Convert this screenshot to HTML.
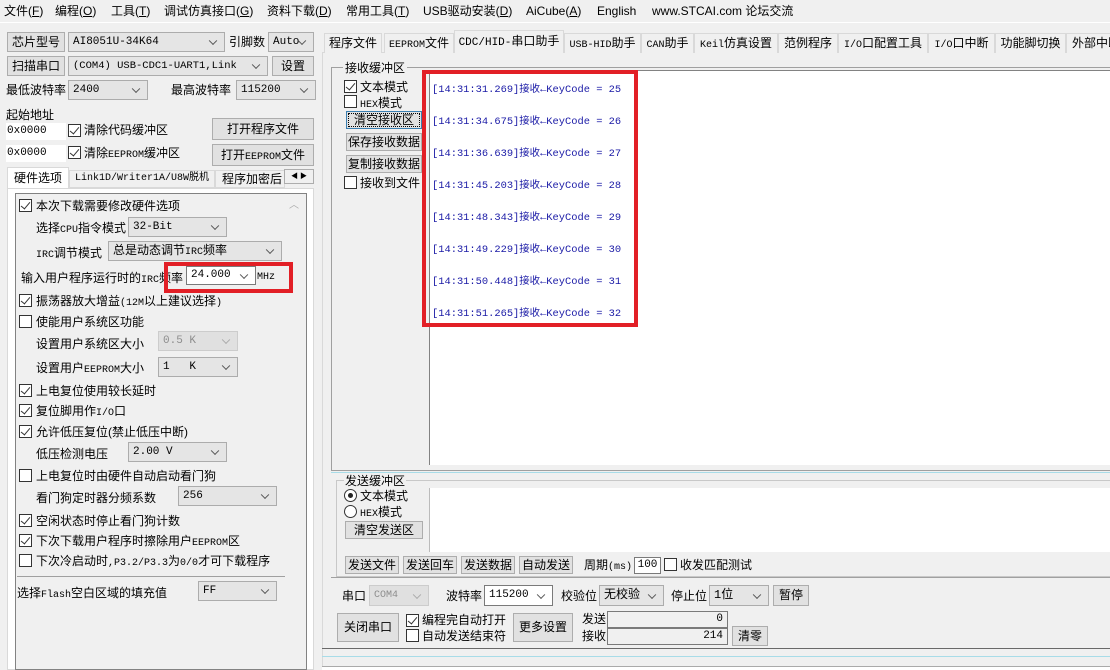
<!DOCTYPE html>
<html><head><meta charset="utf-8"><style>
*{box-sizing:border-box;margin:0;padding:0}
body{width:1110px;height:670px;background:#f0f0f0;position:relative;overflow:hidden;font-family:"Liberation Sans","Noto Sans CJK SC",sans-serif;font-size:12px;color:#000}
.a{position:absolute;white-space:nowrap}
.t{position:absolute;white-space:nowrap;line-height:16px}
.btn{position:absolute;background:#e1e1e1;border:1px solid #adadad;text-align:center;white-space:nowrap;font-size:12px}
.sel{position:absolute;background:#e5e5e5;border:1px solid #acacac;font-family:"Liberation Mono","Noto Sans CJK SC",monospace;font-size:11px;padding-left:4px;white-space:nowrap}
.sel:after{content:"";position:absolute;right:8px;top:50%;width:5px;height:5px;border-right:1px solid #555;border-bottom:1px solid #555;transform:translateY(-70%) rotate(45deg)}
.sel.w{background:#fff;border-color:#7a7a7a}
.sel.dis{color:#8d8d8d;background:#e0e0e0;border-color:#ccc}
.sel.dis:after{border-color:#aaa}
.cb{position:absolute;width:13px;height:13px;border:1px solid #333;background:#fff}
.cb.on:after{content:"";position:absolute;left:3px;top:0px;width:4px;height:8px;border-right:1.5px solid #333;border-bottom:1.5px solid #333;transform:rotate(40deg)}
.rb{position:absolute;width:13px;height:13px;border:1px solid #333;border-radius:50%;background:#fff}
.rb.on:after{content:"";position:absolute;left:3px;top:3px;width:5px;height:5px;border-radius:50%;background:#222}
.in{position:absolute;background:#fff;border:1px solid #7a7a7a;font-family:"Liberation Mono",monospace;font-size:11px;white-space:nowrap}
.tab{position:absolute;top:33px;height:20px;border:1px solid #d9d9d9;border-bottom:none;background:#f0f0f0;line-height:18px;text-align:center;white-space:nowrap;font-size:12px;overflow:hidden}
.m{font-family:"Liberation Mono","Noto Sans CJK SC",monospace;font-size:10px}
.line{position:absolute;font-family:"Liberation Mono","Noto Sans CJK SC",monospace;font-size:10.4px;color:#1a1aa6;left:432px}
</style></head><body>
<!-- menu -->
<div class="t" style="left:4px;top:3px">文件(<u>F</u>)</div>
<div class="t" style="left:55px;top:3px">编程(<u>O</u>)</div>
<div class="t" style="left:111px;top:3px">工具(<u>T</u>)</div>
<div class="t" style="left:164px;top:3px">调试仿真接口(<u>G</u>)</div>
<div class="t" style="left:267px;top:3px">资料下载(<u>D</u>)</div>
<div class="t" style="left:346px;top:3px">常用工具(<u>T</u>)</div>
<div class="t" style="left:423px;top:3px">USB驱动安装(<u>D</u>)</div>
<div class="t" style="left:526px;top:3px">AiCube(<u>A</u>)</div>
<div class="t" style="left:597px;top:3px">English</div>
<div class="t" style="left:652px;top:3px">www.STCAI.com 论坛交流</div>
<div class="a" style="left:0;top:22px;width:1110px;height:1px;background:#fff"></div>

<!-- left top -->
<div class="btn" style="left:7px;top:32px;width:58px;height:20px;line-height:18px">芯片型号</div>
<div class="sel" style="left:68px;top:32px;width:157px;height:20px;line-height:18px">AI8051U-34K64</div>
<div class="t" style="left:229px;top:34px">引脚数</div>
<div class="sel" style="left:268px;top:32px;width:46px;height:20px;line-height:18px">Auto</div>
<div class="btn" style="left:7px;top:56px;width:58px;height:20px;line-height:18px">扫描串口</div>
<div class="sel" style="left:68px;top:56px;width:200px;height:20px;line-height:18px;font-size:10.5px">(COM4) USB-CDC1-UART1,Link</div>
<div class="btn" style="left:272px;top:56px;width:42px;height:20px;line-height:18px">设置</div>
<div class="t" style="left:6px;top:82px">最低波特率</div>
<div class="sel" style="left:68px;top:80px;width:80px;height:20px;line-height:18px">2400</div>
<div class="t" style="left:171px;top:82px">最高波特率</div>
<div class="sel" style="left:236px;top:80px;width:80px;height:20px;line-height:18px">115200</div>
<div class="t" style="left:6px;top:107px">起始地址</div>
<div class="in" style="left:6px;top:123px;width:60px;height:17px;line-height:15px;border-color:#fff">0x0000</div>
<div class="cb on" style="left:68px;top:124px"></div><div class="t" style="left:84px;top:122px">清除代码缓冲区</div>
<div class="btn" style="left:212px;top:118px;width:102px;height:22px;line-height:20px">打开程序文件</div>
<div class="in" style="left:6px;top:145px;width:60px;height:17px;line-height:15px;border-color:#fff">0x0000</div>
<div class="cb on" style="left:68px;top:146px"></div><div class="t" style="left:84px;top:145px">清除<span class="m">EEPROM</span>缓冲区</div>
<div class="btn" style="left:212px;top:144px;width:102px;height:22px;line-height:20px">打开<span class="m">EEPROM</span>文件</div>
<!-- left tabs -->
<div class="a" style="left:7px;top:167px;width:62px;height:22px;background:#fff;border:1px solid #d9d9d9;border-bottom:none;text-align:center;line-height:20px">硬件选项</div>
<div class="a m" style="left:69px;top:170px;width:146px;height:18px;border:1px solid #d9d9d9;line-height:16px;text-align:center">Link1D/Writer1A/U8W脱机</div>
<div class="a" style="left:215px;top:170px;width:70px;height:18px;border:1px solid #d9d9d9;line-height:16px;padding-left:6px;overflow:hidden">程序加密后</div>
<div class="a" style="left:284px;top:169px;width:30px;height:15px;border:1px solid #adadad;background:#f0f0f0;font-size:7px;line-height:13px;text-align:center">◀ ▶</div>
<div class="a" style="left:7px;top:188px;width:307px;height:482px;background:#fff;border:1px solid #d9d9d9"></div>
<div class="a" style="left:15px;top:193px;width:292px;height:477px;background:#f0f0f0;border:1px solid #828282"></div>
<div class="t" style="left:289px;top:198px;color:#aaa;font-size:10px">︿</div>

<div class="cb on" style="left:19px;top:199px"></div><div class="t" style="left:36px;top:198px">本次下载需要修改硬件选项</div>
<div class="t" style="left:36px;top:220px">选择<span class="m">CPU</span>指令模式</div>
<div class="sel" style="left:128px;top:217px;width:99px;height:20px;line-height:18px">32-Bit</div>
<div class="t" style="left:36px;top:245px"><span class="m">IRC</span>调节模式</div>
<div class="sel" style="left:108px;top:241px;width:174px;height:20px;line-height:18px;font-size:12px">总是动态调节<span class="m">IRC</span>频率</div>
<div class="t" style="left:21px;top:270px">输入用户程序运行时的<span class="m">IRC</span>频率</div>
<div class="sel w" style="left:186px;top:266px;width:70px;height:19px;line-height:17px">24.000</div>
<div class="t m" style="left:257px;top:270px">MHz</div>
<div class="a" style="left:164px;top:262px;width:129px;height:31px;border:4px solid #e21f26"></div>
<div class="cb on" style="left:19px;top:294px"></div><div class="t" style="left:36px;top:293px">振荡器放大增益<span class="m">(12M</span>以上建议选择<span class="m">)</span></div>
<div class="cb" style="left:19px;top:315px"></div><div class="t" style="left:36px;top:314px">使能用户系统区功能</div>
<div class="t" style="left:36px;top:336px">设置用户系统区大小</div>
<div class="sel dis" style="left:158px;top:331px;width:80px;height:20px;line-height:18px">0.5 K</div>
<div class="t" style="left:36px;top:360px">设置用户<span class="m">EEPROM</span>大小</div>
<div class="sel" style="left:158px;top:357px;width:80px;height:20px;line-height:18px">1&nbsp;&nbsp;&nbsp;K</div>
<div class="cb on" style="left:19px;top:384px"></div><div class="t" style="left:36px;top:383px">上电复位使用较长延时</div>
<div class="cb on" style="left:19px;top:404px"></div><div class="t" style="left:36px;top:403px">复位脚用作<span class="m">I/O</span>口</div>
<div class="cb on" style="left:19px;top:425px"></div><div class="t" style="left:36px;top:424px">允许低压复位(禁止低压中断)</div>
<div class="t" style="left:36px;top:446px">低压检测电压</div>
<div class="sel" style="left:128px;top:442px;width:99px;height:20px;line-height:18px">2.00 V</div>
<div class="cb" style="left:19px;top:469px"></div><div class="t" style="left:36px;top:468px">上电复位时由硬件自动启动看门狗</div>
<div class="t" style="left:36px;top:490px">看门狗定时器分频系数</div>
<div class="sel" style="left:178px;top:486px;width:99px;height:20px;line-height:18px">256</div>
<div class="cb on" style="left:19px;top:514px"></div><div class="t" style="left:36px;top:513px">空闲状态时停止看门狗计数</div>
<div class="cb on" style="left:19px;top:534px"></div><div class="t" style="left:36px;top:533px">下次下载用户程序时擦除用户<span class="m">EEPROM</span>区</div>
<div class="cb" style="left:19px;top:554px"></div><div class="t" style="left:36px;top:553px">下次冷启动时<span class="m">,P3.2/P3.3</span>为<span class="m">0/0</span>才可下载程序</div>
<div class="a" style="left:17px;top:576px;width:268px;height:1px;background:#a0a0a0"></div>
<div class="t" style="left:17px;top:585px">选择<span class="m">Flash</span>空白区域的填充值</div>
<div class="sel" style="left:198px;top:581px;width:79px;height:20px;line-height:18px">FF</div>

<!-- right tabs -->
<div class="a" style="left:322px;top:52px;width:788px;height:618px;background:#f0f0f0;border-left:1px solid #d9d9d9;border-top:1px solid #d9d9d9"></div>
<div class="tab" style="left:324px;width:58px">程序文件</div>
<div class="tab" style="left:384px;width:70px"><span class="m">EEPROM</span>文件</div>
<div class="a" style="left:454px;top:30px;width:110px;height:23px;border:1px solid #d9d9d9;border-bottom:none;background:#f0f0f0;line-height:20px;text-align:center"><span class="m" style="font-size:11px">CDC/HID-</span>串口助手</div>
<div class="tab" style="left:564px;width:77px"><span class="m">USB-HID</span>助手</div>
<div class="tab" style="left:641px;width:53px"><span class="m">CAN</span>助手</div>
<div class="tab" style="left:694px;width:84px"><span class="m">Keil</span>仿真设置</div>
<div class="tab" style="left:778px;width:60px">范例程序</div>
<div class="tab" style="left:838px;width:90px"><span class="m">I/O</span>口配置工具</div>
<div class="tab" style="left:928px;width:67px"><span class="m">I/O</span>口中断</div>
<div class="tab" style="left:995px;width:71px">功能脚切换</div>
<div class="tab" style="left:1066px;width:50px;text-align:left;padding-left:5px">外部中断</div>

<!-- receive group -->
<div class="a" style="left:331px;top:67px;width:790px;height:404px;border:1px solid #a0a0a0;border-right:none"></div>
<div class="t" style="left:343px;top:60px;background:#f0f0f0;padding:0 2px">接收缓冲区</div>
<div class="cb on" style="left:344px;top:80px"></div><div class="t" style="left:360px;top:79px">文本模式</div>
<div class="cb" style="left:344px;top:95px"></div><div class="t" style="left:360px;top:95px"><span class="m">HEX</span>模式</div>
<div class="btn" style="left:346px;top:111px;width:76px;height:18px;line-height:16px;border:1px solid #3c7fb1;outline:1px dotted #000;outline-offset:-3px">清空接收区</div>
<div class="btn" style="left:346px;top:133px;width:76px;height:18px;line-height:16px">保存接收数据</div>
<div class="btn" style="left:346px;top:155px;width:76px;height:18px;line-height:16px">复制接收数据</div>
<div class="cb" style="left:344px;top:176px"></div><div class="t" style="left:360px;top:175px">接收到文件</div>
<div class="a" style="left:429px;top:70px;width:681px;height:395px;background:#fff;border-left:1px solid #828282;border-top:1px solid #828282"></div>
<div class="line" style="top:80px">[14:31:31.269]接收←KeyCode = 25</div>
<div class="line" style="top:112px">[14:31:34.675]接收←KeyCode = 26</div>
<div class="line" style="top:144px">[14:31:36.639]接收←KeyCode = 27</div>
<div class="line" style="top:176px">[14:31:45.203]接收←KeyCode = 28</div>
<div class="line" style="top:208px">[14:31:48.343]接收←KeyCode = 29</div>
<div class="line" style="top:240px">[14:31:49.229]接收←KeyCode = 30</div>
<div class="line" style="top:272px">[14:31:50.448]接收←KeyCode = 31</div>
<div class="line" style="top:304px">[14:31:51.265]接收←KeyCode = 32</div>
<div class="a" style="left:422px;top:70px;width:216px;height:257px;border:4px solid #e21f26"></div>
<div class="a" style="left:331px;top:472px;width:779px;height:1px;background:#a8dce8"></div>

<!-- send group -->
<div class="a" style="left:336px;top:480px;width:790px;height:97px;border:1px solid #c8c8c8;border-right:none"></div>
<div class="t" style="left:344px;top:473px;background:#f0f0f0;padding:0 1px">发送缓冲区</div>
<div class="rb on" style="left:344px;top:489px"></div><div class="t" style="left:360px;top:488px">文本模式</div>
<div class="rb" style="left:344px;top:505px"></div><div class="t" style="left:360px;top:504px"><span class="m">HEX</span>模式</div>
<div class="btn" style="left:345px;top:521px;width:78px;height:18px;line-height:16px">清空发送区</div>
<div class="a" style="left:429px;top:488px;width:681px;height:64px;background:#fff;border-left:1px solid #bbb"></div>
<div class="btn" style="left:345px;top:556px;width:54px;height:18px;line-height:16px">发送文件</div>
<div class="btn" style="left:403px;top:556px;width:54px;height:18px;line-height:16px">发送回车</div>
<div class="btn" style="left:461px;top:556px;width:54px;height:18px;line-height:16px">发送数据</div>
<div class="btn" style="left:519px;top:556px;width:54px;height:18px;line-height:16px">自动发送</div>
<div class="t" style="left:584px;top:557px">周期<span class="m">(ms)</span></div>
<div class="in" style="left:634px;top:557px;width:27px;height:17px;line-height:15px;text-align:center">100</div>
<div class="cb" style="left:664px;top:558px"></div><div class="t" style="left:680px;top:557px">收发匹配测试</div>
<div class="a" style="left:331px;top:577px;width:779px;height:1px;background:#a0a0a0"></div>

<!-- serial settings -->
<div class="t" style="left:342px;top:588px">串口</div>
<div class="sel dis" style="left:369px;top:585px;width:60px;height:21px;line-height:19px;font-size:10px">COM4</div>
<div class="t" style="left:446px;top:588px">波特率</div>
<div class="sel w" style="left:484px;top:585px;width:69px;height:21px;line-height:19px">115200</div>
<div class="t" style="left:561px;top:588px">校验位</div>
<div class="sel" style="left:599px;top:585px;width:65px;height:21px;line-height:19px;font-size:12px">无校验</div>
<div class="t" style="left:671px;top:588px">停止位</div>
<div class="sel" style="left:709px;top:585px;width:60px;height:21px;line-height:19px;font-size:12px">1位</div>
<div class="btn" style="left:773px;top:585px;width:36px;height:21px;line-height:19px">暂停</div>
<div class="btn" style="left:337px;top:613px;width:62px;height:29px;line-height:27px">关闭串口</div>
<div class="cb on" style="left:406px;top:614px"></div><div class="t" style="left:422px;top:612px">编程完自动打开</div>
<div class="cb" style="left:406px;top:629px"></div><div class="t" style="left:422px;top:628px">自动发送结束符</div>
<div class="btn" style="left:513px;top:613px;width:60px;height:29px;line-height:27px">更多设置</div>
<div class="t" style="left:582px;top:611px">发送</div>
<div class="in" style="left:607px;top:611px;width:121px;height:17px;line-height:15px;text-align:right;padding-right:4px;background:#f0f0f0">0</div>
<div class="t" style="left:582px;top:628px">接收</div>
<div class="in" style="left:607px;top:628px;width:121px;height:17px;line-height:15px;text-align:right;padding-right:4px;background:#f0f0f0">214</div>
<div class="btn" style="left:732px;top:626px;width:36px;height:20px;line-height:18px">清零</div>
<div class="a" style="left:322px;top:648px;width:788px;height:1px;background:#696969"></div>
<div class="a" style="left:322px;top:656px;width:788px;height:1px;background:#a8dce8"></div>
<div class="a" style="left:322px;top:666px;width:788px;height:4px;background:#fff;border-top:1px solid #aaa"></div>
</body></html>
